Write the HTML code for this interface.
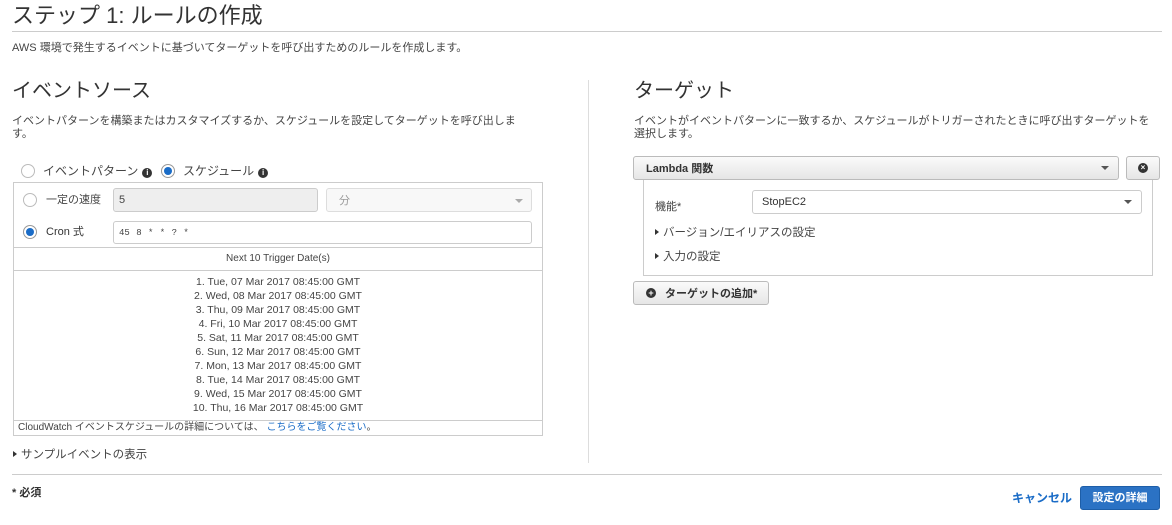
<!DOCTYPE html>
<html><head><meta charset="utf-8"><style>
*{box-sizing:border-box;margin:0;padding:0}
body{width:1172px;height:525px;background:#fff;font-family:"Liberation Sans","Noto Sans CJK JP",sans-serif;color:#444;position:relative;overflow:hidden;font-size:11px}
.a{position:absolute;white-space:nowrap}
.inp{position:absolute;border:1px solid #ccc;border-radius:3px;background:#fff;padding-left:5px;display:flex;align-items:center}
.rad{position:absolute;width:14px;height:14px;border-radius:50%;border:1px solid #bbb;background:#fff}
.rad.on::after{content:"";position:absolute;left:2px;top:2px;width:8px;height:8px;border-radius:50%;background:#1a6cc7}
.rad.on{border-color:#999}
.btn{position:absolute;border:1px solid #bbb;border-radius:3px;background:linear-gradient(#fafafa,#e6e6e6);display:flex;align-items:center;color:#333;font-weight:bold}
.car{position:absolute;width:0;height:0;border-left:4px solid transparent;border-right:4px solid transparent;border-top:4px solid #555}
.tri{display:inline-block;width:0;height:0;border-top:3px solid transparent;border-bottom:3px solid transparent;border-left:4px solid #333;margin-right:4px;vertical-align:1px}
.info{display:inline-block;width:10px;height:10px;border-radius:50%;background:#333;color:#fff;font-size:8px;line-height:10px;text-align:center;font-weight:bold;vertical-align:0;margin-left:4px}
.dates div{height:14px;line-height:14px;text-align:center;font-size:10.5px;color:#444}
</style></head><body>
<div class="a" style="left:12px;top:1px;font-size:22px;line-height:30px;color:#333">ステップ 1: ルールの作成</div>
<div class="a" style="left:12px;top:31px;width:1150px;height:1px;background:#ccc"></div>
<div class="a" style="left:12px;top:41px;font-size:11px;line-height:14px">AWS 環境で発生するイベントに基づいてターゲットを呼び出すためのルールを作成します。</div>

<div class="a" style="left:12px;top:78px;font-size:20px;line-height:26px;color:#333">イベントソース</div>
<div class="a" style="left:12px;top:115px;line-height:13px;white-space:normal;width:530px">イベントパターンを構築またはカスタマイズするか、スケジュールを設定してターゲットを呼び出しま<br>す。</div>

<div class="rad" style="left:21px;top:164px"></div>
<div class="a" style="left:43px;top:163px;line-height:16px;font-size:12px">イベントパターン<span class="info">i</span></div>
<div class="rad on" style="left:161px;top:164px"></div>
<div class="a" style="left:183px;top:163px;line-height:16px;font-size:12px">スケジュール<span class="info">i</span></div>

<div class="a" style="left:13px;top:182px;width:530px;height:254px;border:1px solid #ccc"></div>
<div class="rad" style="left:23px;top:193px"></div>
<div class="a" style="left:46px;top:193px;line-height:14px;font-size:11px">一定の速度</div>
<div class="inp" style="left:113px;top:188px;width:205px;height:24px;background:#eee">5</div>
<div class="inp" style="left:326px;top:188px;width:206px;height:24px;background:#f8f8f8;border-color:#ddd;padding-left:12px;color:#999">分</div>
<div class="car" style="left:515px;top:199px;border-top-color:#aaa"></div>
<div class="rad on" style="left:23px;top:225px"></div>
<div class="a" style="left:46px;top:225px;line-height:14px;font-size:11px;color:#333">Cron 式</div>
<div class="inp" style="left:113px;top:221px;width:419px;height:23px;font-size:9px;font-family:'Liberation Mono',monospace;word-spacing:1px">45 8 * * ? *</div>
<div class="a" style="left:13px;top:247px;width:530px;height:1px;background:#ccc"></div>
<div class="a" style="left:13px;top:252px;width:530px;text-align:center;font-size:10px;line-height:14px">Next 10 Trigger Date(s)</div>
<div class="a" style="left:13px;top:270px;width:530px;height:1px;background:#ccc"></div>
<div class="a dates" style="left:13px;top:275px;width:530px">
<div>1. Tue, 07 Mar 2017 08:45:00 GMT</div><div>2. Wed, 08 Mar 2017 08:45:00 GMT</div><div>3. Thu, 09 Mar 2017 08:45:00 GMT</div><div>4. Fri, 10 Mar 2017 08:45:00 GMT</div><div>5. Sat, 11 Mar 2017 08:45:00 GMT</div><div>6. Sun, 12 Mar 2017 08:45:00 GMT</div><div>7. Mon, 13 Mar 2017 08:45:00 GMT</div><div>8. Tue, 14 Mar 2017 08:45:00 GMT</div><div>9. Wed, 15 Mar 2017 08:45:00 GMT</div><div>10. Thu, 16 Mar 2017 08:45:00 GMT</div></div>
<div class="a" style="left:13px;top:420px;width:530px;height:1px;background:#ccc"></div>
<div class="a" style="left:18px;top:421px;font-size:10px;line-height:14px">CloudWatch イベントスケジュールの詳細については、 <span style="color:#1a6cc7">こちらをご覧ください</span>。</div>
<div class="a" style="left:13px;top:448px;font-size:11.5px;line-height:14px"><span class="tri"></span>サンプルイベントの表示</div>

<div class="a" style="left:588px;top:80px;width:1px;height:383px;background:#ddd"></div>

<div class="a" style="left:634px;top:78px;font-size:20px;line-height:26px;color:#333">ターゲット</div>
<div class="a" style="left:634px;top:115px;line-height:13px">イベントがイベントパターンに一致するか、スケジュールがトリガーされたときに呼び出すターゲットを<br>選択します。</div>
<div class="btn" style="left:633px;top:156px;width:486px;height:24px;padding-left:12px;font-size:11px">Lambda 関数</div>
<div class="car" style="left:1101px;top:166px"></div>
<div class="btn" style="left:1126px;top:156px;width:34px;height:24px;justify-content:center"><span style="width:10px;height:10px;border-radius:50%;background:#333;color:#fff;font-size:8px;line-height:10px;text-align:center">×</span></div>
<div class="a" style="left:643px;top:180px;width:510px;height:96px;border:1px solid #ccc;border-top:none"></div>
<div class="a" style="left:655px;top:200px;font-size:11px;line-height:14px">機能*</div>
<div class="inp" style="left:752px;top:190px;width:390px;height:24px;padding-left:9px;color:#333;font-size:11px">StopEC2</div>
<div class="car" style="left:1124px;top:200px"></div>
<div class="a" style="left:655px;top:226px;font-size:11.5px;line-height:14px"><span class="tri"></span>バージョン/エイリアスの設定</div>
<div class="a" style="left:655px;top:250px;font-size:11.5px;line-height:14px"><span class="tri"></span>入力の設定</div>
<div class="btn" style="left:633px;top:281px;width:136px;height:24px;padding-left:12px;font-size:11px"><span style="width:10px;height:10px;border-radius:50%;background:#333;color:#fff;font-size:9px;line-height:10px;text-align:center;margin-right:9px">+</span>ターゲットの追加*</div>

<div class="a" style="left:12px;top:474px;width:1150px;height:1px;background:#ccc"></div>
<div class="a" style="left:12px;top:486px;font-size:11px;line-height:14px;color:#333;font-weight:bold">* 必須</div>
<div class="a" style="left:1012px;top:491px;font-size:12px;line-height:14px;color:#1a6cc7;font-weight:bold">キャンセル</div>
<div class="a" style="left:1080px;top:486px;width:80px;height:24px;background:#2b72c4;border:1px solid #1d5ea8;border-radius:3px;color:#fff;font-weight:bold;font-size:11px;text-align:center;line-height:22px">設定の詳細</div>
</body></html>
